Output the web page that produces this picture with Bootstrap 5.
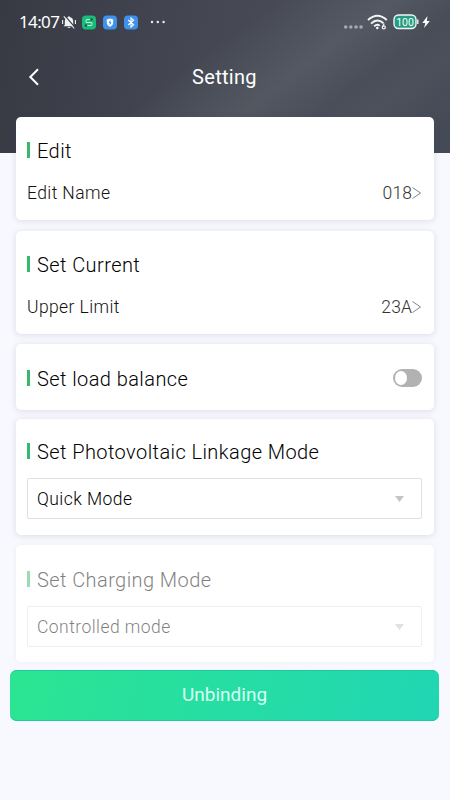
<!DOCTYPE html>
<html lang="en">
<head>
<meta charset="utf-8">
<meta name="viewport" content="width=device-width, initial-scale=1">
<title>Setting</title>
<link href="https://cdn.jsdelivr.net/npm/bootstrap@5.3.0/dist/css/bootstrap.min.css" rel="stylesheet">
<style>
body{width:450px;height:800px;overflow:hidden;background:#f8f9fe;font-family:Roboto,"Noto Sans",sans-serif;font-weight:300;color:#000}
.hero{height:153px;margin-bottom:-36px;background:
 linear-gradient(143deg,transparent 42%,rgba(130,140,142,.2) 60%,rgba(110,118,122,.05) 72%,rgba(120,128,134,.1) 80%,rgba(60,68,80,.12) 94%),
 linear-gradient(100deg,#373a43,#454853 45%,#494c58 70%,#454b56)}
.status{height:44px;padding:0 19px}
.clock{font-family:"Noto Sans",sans-serif;font-weight:400;font-size:17px;letter-spacing:-.65px;width:43px;white-space:nowrap}
.app-bar{height:66px}
.back-link{width:70px}
.app-title{font-size:20px;font-weight:400;letter-spacing:.3px;margin-right:1px}
.panel{border:0;border-radius:5px;padding:0 12px 0 11px;box-shadow:0 1px 6px rgba(70,70,110,.17)}
.panel-title{font-size:20px;line-height:24px;letter-spacing:.42px;white-space:nowrap}
.tick{width:3px;height:16px;background:#35b96b;margin-right:7px;margin-top:-2px}
.line{font-size:17.5px;line-height:24px;color:#111;letter-spacing:.4px}
.val{color:#333;letter-spacing:.1px}
.field{height:41px;border:1px solid #dfe0e2;border-radius:2px;padding:1px 17px 0 9px;font-size:17.5px;letter-spacing:.45px}
.toggle{width:29px;height:18px;border-radius:9px;background:#b2b2b2;padding:2px;margin-top:2px}
.knob{width:12px;height:14px;border-radius:50%;background:#fff}
.inactive{box-shadow:0 0 5px rgba(90,70,110,.07)}
.unbind{height:51px;margin:8px 11px 0 10px;border:0;border-radius:7px;color:#d8fff2;font-size:19px;font-weight:400;background:linear-gradient(100deg,#2ce592,#20d6b4);box-shadow:inset 0 1px 0 #22c99c,inset 0 -1px 0 #22c99c}
.cards{margin:0 16px}
</style>
</head>
<body>
<header class="hero">
  <div class="status d-flex align-items-center text-white">
    <span class="clock">14:07</span>
    <svg width="14" height="14" viewBox="0 0 14 14"><path d="M2.800 10V6.200Q3 2.800 5.800 2.200Q7 .3 8.200 2.200Q11 2.800 11.200 6.200V10L12.500 11.300H1.500zM5.300 12h3.400q-1.700 2-3.400 0" fill="#f2f2f2"/><path d="M3 .8l10 11.700" stroke="#3c3f49" stroke-width="1.200"/><path d="M1.800 1.400l10.400 12.100M.6 5v4M13.400 5v4" stroke="#f2f2f2" stroke-width="1.100"/></svg>
    <svg style="margin-left:5px" width="58" height="15" viewBox="0 0 58 15"><rect x="1" y=".5" width="14" height="14" rx="4" fill="#17bd79"/><path d="M5 7V5.500q0-1 1-1h4M11 8v1.500q0 1-1 1H6M5 7.500h6" stroke="#b9f5d9" fill="none"/><circle cx="10.500" cy="4.500" r="1.200" fill="#244b43"/><circle cx="5" cy="10.500" r="1.200" fill="#244b43"/><rect x="22" y=".5" width="14" height="14" rx="4" fill="#3f92ec"/><path d="M29 3.500l3.200 1V8q0 2.500-3.200 4-3.200-1.500-3.200-4V4.500z" fill="#fff"/><path d="M29.500 5.500L28 7.700h2L28.700 9.500" stroke="#3f92ec" fill="none"/><rect x="43" y=".5" width="14" height="14" rx="4" fill="#3f92ec"/><path d="M47.200 5l5.400 4.800L50 12V3l2.600 2.200L47.200 10" fill="none" stroke="#fff" stroke-width="1.100"/></svg>
    <svg width="18" height="6" viewBox="0 0 18 6" style="margin-left:10px" fill="#eee"><circle cx="3" cy="3" r="1.200"/><circle cx="8.800" cy="3" r="1.200"/><circle cx="14.600" cy="3" r="1.200"/></svg>
    <svg class="ms-auto" width="92" height="20" viewBox="339 12 92 20"><g fill="#a7a9af"><circle cx="345.700" cy="27" r="1.800"/><circle cx="350.800" cy="27" r="1.800"/><circle cx="356" cy="27" r="1.800"/><circle cx="361" cy="27" r="1.800"/></g><g fill="none" stroke="#f4f4f4" stroke-width="1.900"><path d="M368 20q9.300-8.500 18.800 0M371 23.600q6.300-6 12.500-.3M374.200 26.300q3.200-2.800 5.400-.5"/><circle cx="383.800" cy="27.400" r="1.500" stroke-width="1.300"/><path d="M382.500 27l1.700-3.600" stroke-width="1.200"/></g><circle cx="377.300" cy="28" r="1.200" fill="#fff"/><rect x="394" y="15" width="22" height="13.500" rx="4.500" fill="#279b83" stroke="#f1f6f5" stroke-width="1.400"/><path d="M417.800 19.500v4.500" stroke="#eee" stroke-width="1.400"/><text x="405" y="25.600" text-anchor="middle" font-family="Roboto" font-weight="400" font-size="10.500" fill="#effff9">100</text><path d="M427.500 16l-5.200 7h3l-1.200 5 5.700-7h-3z" fill="#fff"/></svg>
  </div>
  <div class="app-bar d-flex align-items-center justify-content-between text-white">
    <a class="back-link d-flex" href="#" aria-label="Back"><svg width="42" height="20" viewBox="0 0 42 20"><path d="M38 2.200L30.300 10l7.700 7.800" fill="none" stroke="#fff" stroke-width="2"/></svg></a>
    <span class="app-title">Setting</span>
    <span class="back-link"></span>
  </div>
</header>
<main>
  <div class="cards">
    <section class="card panel" style="height:103px">
      <div class="d-flex align-items-center panel-title" style="margin-top:22px"><span class="tick"></span><span>Edit</span></div>
      <div class="d-flex justify-content-between line" style="margin-top:18px"><span>Edit Name</span><span class="val d-flex align-items-center">018<svg width="10" height="14" viewBox="0 0 10 14"><path d="M.5 1.500l8 5.500-8 5.500" fill="none" stroke="#777" stroke-width=".9"/></svg></span></div>
    </section>
    <section class="card panel" style="height:103px;margin-top:11px">
      <div class="d-flex align-items-center panel-title" style="margin-top:22px"><span class="tick"></span><span>Set Current</span></div>
      <div class="d-flex justify-content-between line" style="margin-top:18px"><span>Upper Limit</span><span class="val d-flex align-items-center">23A<svg width="10" height="14" viewBox="0 0 10 14"><path d="M.5 1.500l8 5.500-8 5.500" fill="none" stroke="#777" stroke-width=".9"/></svg></span></div>
    </section>
    <section class="card panel flex-row justify-content-between align-items-center" style="height:66px;margin-top:10px">
      <div class="d-flex align-items-center panel-title pt-1"><span class="tick"></span><span>Set load balance</span></div>
      <div class="toggle d-flex align-items-center" role="switch" aria-checked="false"><div class="knob"></div></div>
    </section>
    <section class="card panel" style="height:116px;margin-top:9px">
      <div class="d-flex align-items-center panel-title" style="margin-top:21px"><span class="tick"></span><span>Set Photovoltaic Linkage Mode</span></div>
      <div class="field d-flex justify-content-between align-items-center" style="margin-top:14px"><span>Quick Mode</span><svg width="9" height="6"><path d="M0 0h9L4.500 6z" fill="#c0c4cc"/></svg></div>
    </section>
    <section class="card panel inactive" style="height:117px;margin-top:10px">
      <div class="d-flex align-items-center panel-title opacity-50" style="margin-top:23px"><span class="tick"></span><span>Set Charging Mode</span></div>
      <div class="field d-flex justify-content-between align-items-center opacity-50" style="margin-top:14px"><span>Controlled mode</span><svg width="9" height="6"><path d="M0 0h9L4.500 6z" fill="#c0c4cc"/></svg></div>
    </section>
  </div>
  <div class="d-flex"><button class="btn unbind flex-grow-1">Unbinding</button></div>
</main>
<script src="https://cdn.jsdelivr.net/npm/bootstrap@5.3.0/dist/js/bootstrap.bundle.min.js"></script>
</body>
</html>
